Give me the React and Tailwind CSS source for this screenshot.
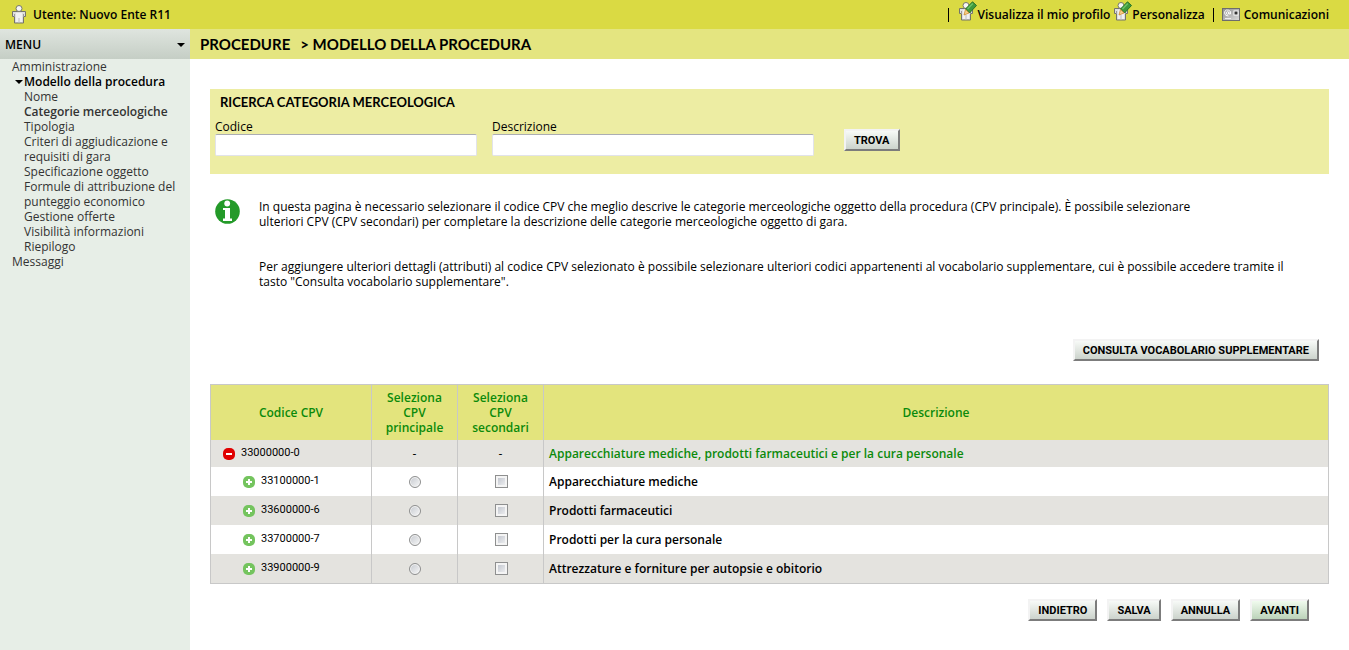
const MENU = [
  'Nome',
  'Categorie merceologiche',
  'Tipologia',
  'Criteri di aggiudicazione e requisiti di gara',
  'Specificazione oggetto',
  'Formule di attribuzione del punteggio economico',
  'Gestione offerte',
  'Visibilità informazioni',
  'Riepilogo',
]

const CATEGORIES = [
  { code: '33100000-1', name: 'Apparecchiature mediche' },
  { code: '33600000-6', name: 'Prodotti farmaceutici' },
  { code: '33700000-7', name: 'Prodotti per la cura personale' },
  { code: '33900000-9', name: 'Attrezzature e forniture per autopsie e obitorio' },
]

const BEVEL = "h-[22px] border-2 border-t-[#f3f3f3] border-l-[#f3f3f3] border-r-[#7c7c7c] border-b-[#7c7c7c] px-2 pt-0.5 font-['Roboto',sans-serif] text-[11px] leading-4 font-bold whitespace-nowrap text-black"

function Button({ children, green, type = 'button' }) {
  const fill = green ? 'bg-linear-to-b from-[#f0fbee] to-[#bcd3ba]' : 'bg-linear-to-b from-[#f7faf7] to-[#ccd3cc]'
  return <button type={type} className={`${BEVEL} ${fill}`}>{children}</button>
}

function Person() {
  return (
    <>
      <path d="M0.5 6.5 H13.5 V11.5 H11.5 V18 H2.5 V11.5 H0.5 Z" fill="#dedede" stroke="#74746a" />
      <path d="M4 8 H10 V17 H4 Z" fill="#f1f1f1" />
      <path d="M2.5 9 V12 M11.5 9 V12" stroke="#999" />
      <path d="M7 13 V18" stroke="#bdbdbd" />
      <circle cx="7" cy="3.5" r="3" fill="#f6f6f6" stroke="#77776a" />
    </>
  )
}

function UserIcon() {
  return <svg width="14" height="19" viewBox="0 0 14 19" aria-hidden="true"><Person /></svg>
}

function EditUserIcon() {
  return (
    <svg width="18" height="20" viewBox="0 0 18 20" aria-hidden="true">
      <g transform="translate(0 1)"><Person /></g>
      <path d="M6.5 8 L13.5 0.8 L17.5 4.5 L10.5 12 Z" fill="#3f9a3c" stroke="#2a7326" />
      <path d="M8.5 8 L13.8 2.5" stroke="#6cc267" strokeWidth="1.5" />
      <path d="M6.5 8.5 L10 12 L5 14 Z" fill="#f6d08a" stroke="#d08a2c" strokeWidth="0.8" />
    </svg>
  )
}

function MailIcon() {
  return (
    <svg width="18" height="13" viewBox="0 0 18 13" aria-hidden="true">
      <defs>
        <linearGradient id="card" x1="0" y1="0" x2="1" y2="1">
          <stop offset="0" stopColor="#8e8e8e" />
          <stop offset="1" stopColor="#dcdcdc" />
        </linearGradient>
      </defs>
      <rect x="0.5" y="0.5" width="17" height="12" fill="url(#card)" stroke="#6d6d6d" />
      <circle cx="5.5" cy="5" r="1.3" fill="none" stroke="#fff" />
      <path d="M7 3.5 V6 H8.5 V3.5 Q7 1.8 4.5 2 Q2.5 2.5 2.5 5 Q2.8 8 6.5 8" fill="none" stroke="#fff" strokeWidth="0.9" />
      <rect x="12" y="3" width="4" height="4" fill="#333" stroke="#fff" />
      <path d="M3 10.5 H9" stroke="#eee" />
    </svg>
  )
}

function InfoIcon() {
  return (
    <svg width="25" height="25" viewBox="0 0 25 25" className="shrink-0" aria-hidden="true">
      <circle cx="12.5" cy="12.5" r="12.3" fill="#249a29" />
      <circle cx="12.2" cy="4.5" r="2.9" fill="#fff" />
      <path d="M8 9 H15 V19.5 H17 V22 H8 V19.5 H10 V11 H8 Z" fill="#fff" />
    </svg>
  )
}

function ToggleIcon({ open }) {
  return (
    <svg width="12" height="12" viewBox="0 0 12 12" aria-hidden="true">
      <rect width="12" height="12" rx="5" fill={open ? '#e00000' : '#74c45e'} />
      <path d={open ? 'M3 6 H9' : 'M3 6 H9 M6 3 V9'} stroke="#fff" strokeWidth="2" />
    </svg>
  )
}

function Caret() {
  return <svg width="8" height="4" viewBox="0 0 8 4" className="shrink-0" aria-hidden="true"><path d="M0 0 H8 L4 4 Z" /></svg>
}

function TopBar() {
  return (
    <header className="flex h-[29px] items-center justify-between bg-[#dada43] pr-5 pl-3 text-xs font-semibold">
      <div className="flex items-center gap-[7px]">
        <UserIcon />
        <span>Utente: Nuovo Ente R11</span>
      </div>
      <nav className="flex items-center">
        <span className="mr-2.5 h-3.5 w-px bg-black" />
        <a href="#profilo" className="flex items-center"><span className="pb-2"><EditUserIcon /></span>Visualizza il mio profilo</a>
        <a href="#personalizza" className="ml-1 flex items-center"><span className="pb-2"><EditUserIcon /></span>Personalizza</a>
        <span className="mx-2 h-3.5 w-px bg-black" />
        <a href="#comunicazioni" className="flex items-center gap-1"><MailIcon />Comunicazioni</a>
      </nav>
    </header>
  )
}

function Sidebar() {
  return (
    <aside className="w-[190px] shrink-0 bg-[#e7eee7]">
      <button type="button" className="flex h-[30px] w-full items-center justify-between bg-linear-to-b from-[#dfe5df] to-[#c5cec5] px-[5px] pt-px text-xs font-semibold">
        MENU <Caret />
      </button>
      <nav className="pr-2 pl-3 text-xs leading-[15px] text-[#333]">
        <a href="#amministrazione" className="block">Amministrazione</a>
        <a href="#modello" className="flex items-center gap-px pl-[3px] font-semibold whitespace-nowrap text-black"><Caret />Modello della procedura</a>
        <ul className="pl-3">
          {MENU.map((label) => (
            <li key={label}>
              <a href="#passo" className={label === 'Categorie merceologiche' ? 'font-semibold' : ''}>{label}</a>
            </li>
          ))}
        </ul>
        <a href="#messaggi" className="block">Messaggi</a>
      </nav>
    </aside>
  )
}

const FIELD = 'h-[22px] rounded-xs border border-[#e2e3ea] border-t-[#abadb3] bg-white px-1'

function SearchPanel() {
  return (
    <form className="h-[85px] bg-[#ededa3] px-[5px] pt-[5px]">
      <h2 className="pl-[5px] font-['Lato',sans-serif] text-[13px] leading-4 font-bold">RICERCA CATEGORIA MERCEOLOGICA</h2>
      <div className="mt-[9px] flex">
        <div className="flex w-[262px] flex-col">
          <label htmlFor="codice" className="leading-[15px]">Codice</label>
          <input id="codice" type="text" className={FIELD} />
        </div>
        <div className="ml-[15px] flex w-[322px] flex-col">
          <label htmlFor="descrizione" className="leading-[15px]">Descrizione</label>
          <input id="descrizione" type="text" className={FIELD} />
        </div>
        <div className="ml-[30px] pt-[10px]"><Button type="submit">TROVA</Button></div>
      </div>
    </form>
  )
}

const TD = 'border-r border-[#c8c8c8] text-center'
const TOGGLE = "flex items-center gap-1.5 font-['Roboto',sans-serif] text-[11px]"
const RADIO = 'block mx-auto size-3 appearance-none rounded-full border border-[#8e8f8f] bg-linear-to-br from-[#c5c9cf] to-[#f8f8f8] shadow-[inset_0_0_0_1px_#f4f4f4]'
const CHECK = 'block mx-auto size-[13px] appearance-none border border-[#8e8f8f] bg-linear-to-br from-[#b9bec8] to-[#f6f6f6] shadow-[inset_0_0_0_2px_#f4f4f4]'

function CpvTable() {
  return (
    <table className="mt-[23px] w-full table-fixed border-separate border-spacing-0 border border-[#c8c8c8]">
      <thead>
        <tr className="h-[55px] bg-[#e3e47d] leading-[15px] text-[#0b8a0b]">
          <th className={`${TD} w-[161px] font-semibold`}>Codice CPV</th>
          <th className={`${TD} w-[86px] px-2 font-semibold`}>Seleziona CPV principale</th>
          <th className={`${TD} w-[86px] px-2 font-semibold`}>Seleziona CPV secondari</th>
          <th className="font-semibold">Descrizione</th>
        </tr>
      </thead>
      <tbody>
        <tr className="h-[27px] bg-[#e4e3df]">
          <td className={TD}>
            <button type="button" className={`${TOGGLE} pl-3`}><ToggleIcon open />33000000-0</button>
          </td>
          <td className={TD}>-</td>
          <td className={TD}>-</td>
          <td className="pl-[5px] font-semibold text-[#0b8a0b]">Apparecchiature mediche, prodotti farmaceutici e per la cura personale</td>
        </tr>
        {CATEGORIES.map((c) => (
          <tr key={c.code} className="h-[29px] even:bg-white odd:bg-[#e4e3df]">
            <td className={TD}>
              <button type="button" className={`${TOGGLE} pl-8`}><ToggleIcon />{c.code}</button>
            </td>
            <td className={TD}><input type="radio" name="principale" aria-label={`CPV principale ${c.code}`} className={RADIO} /></td>
            <td className={`${TD} pl-px`}><input type="checkbox" aria-label={`CPV secondario ${c.code}`} className={CHECK} /></td>
            <td className="pl-[5px] font-semibold">{c.name}</td>
          </tr>
        ))}
      </tbody>
    </table>
  )
}

export default function App() {
  return (
    <div className="flex min-h-screen flex-col bg-white font-['Open_Sans',sans-serif] text-xs text-black">
      <TopBar />
      <div className="flex flex-1">
        <Sidebar />
        <main className="min-w-0 flex-1">
          <h1 className="flex h-[30px] items-center gap-2.5 bg-[#e4e580] pt-px pl-2.5 font-['Lato',sans-serif] text-[15px] font-bold">
            <span>PROCEDURE</span>
            <span>&gt; MODELLO DELLA PROCEDURA</span>
          </h1>
          <div className="px-5 pt-[30px]">
            <SearchPanel />
            <section className="mt-[25px] flex gap-[19px] pl-[5px]">
              <InfoIcon />
              <div className="leading-[15px]">
                <p>
                  In questa pagina è necessario selezionare il codice CPV che meglio descrive le categorie merceologiche oggetto della procedura (CPV principale). È possibile selezionare
                  <br />ulteriori CPV (CPV secondari) per completare la descrizione delle categorie merceologiche oggetto di gara.
                </p>
                <p className="mt-[30px]">
                  Per aggiungere ulteriori dettagli (attributi) al codice CPV selezionato è possibile selezionare ulteriori codici appartenenti al vocabolario supplementare, cui è possibile accedere tramite il
                  <br />tasto "Consulta vocabolario supplementare".
                </p>
              </div>
            </section>
            <div className="mt-[50px] flex justify-end pr-2.5"><Button>CONSULTA VOCABOLARIO SUPPLEMENTARE</Button></div>
            <CpvTable />
            <div className="mt-[15px] flex justify-end gap-2.5 pr-5">
              <Button>INDIETRO</Button>
              <Button>SALVA</Button>
              <Button>ANNULLA</Button>
              <Button green>AVANTI</Button>
            </div>
          </div>
        </main>
      </div>
    </div>
  )
}
